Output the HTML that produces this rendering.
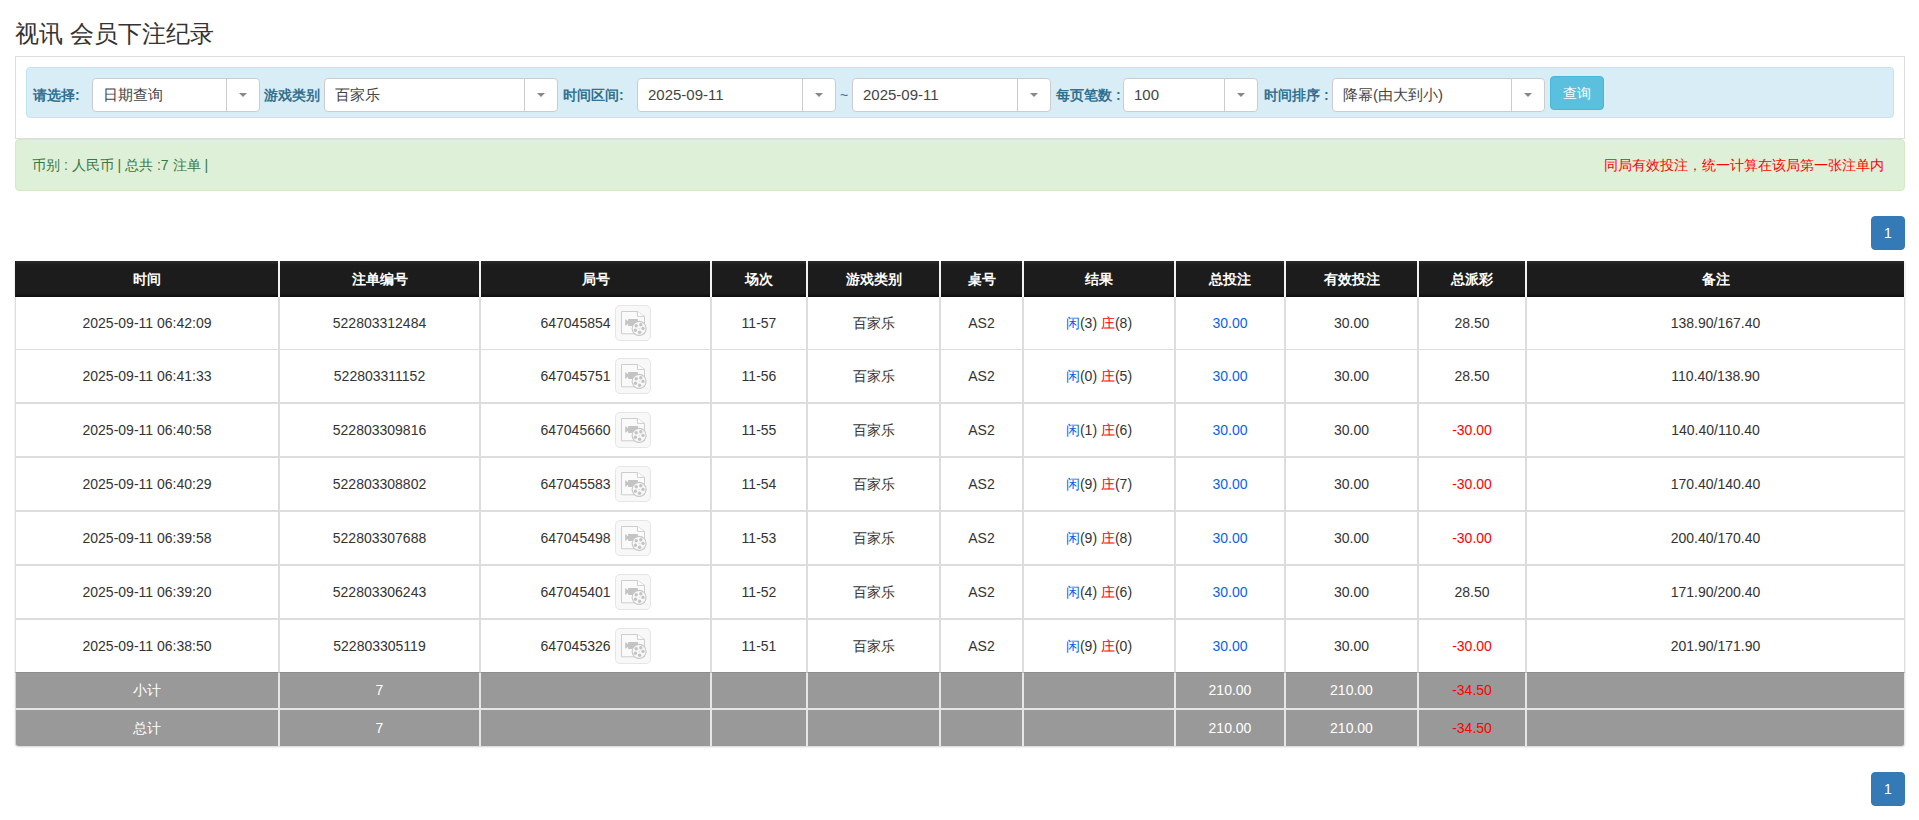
<!DOCTYPE html>
<html>
<head>
<meta charset="utf-8">
<style>
*{box-sizing:border-box;margin:0;padding:0}
html,body{width:1919px;height:820px;overflow:hidden;background:#fff}
body{font-family:"Liberation Sans",sans-serif;font-size:14px;color:#333;position:relative}
.abs{position:absolute}
h1{position:absolute;left:15px;top:18px;font-size:24px;font-weight:normal;line-height:32px;color:#333;white-space:nowrap}
.panel{position:absolute;left:15px;top:56px;width:1890px;height:83px;border:1px solid #ddd;border-bottom:1px solid #ddd;background:#fff}
.well{position:absolute;left:26px;top:67px;width:1868px;height:51px;background:#d9edf7;border:1px solid #bce8f1;border-radius:4px}
.lbl{position:absolute;top:85px;font-size:14px;font-weight:bold;color:#31708f;line-height:20px;white-space:nowrap}
.sel{position:absolute;top:78px;height:34px;background:#fff;border:1px solid #ccc;border-radius:4px;font-size:15px;color:#444;line-height:32px;white-space:nowrap}
.sel .t{position:absolute;left:10px;top:0}
.sel .d{position:absolute;top:0;right:0;height:32px;width:33px;border-left:1px solid #ccc}
.sel .d:after{content:"";position:absolute;left:12px;top:14px;border-left:4px solid transparent;border-right:4px solid transparent;border-top:4px solid #888}
.btn{position:absolute;left:1550px;top:76px;width:54px;height:34px;background:#5bc0de;border:1px solid #46b8da;border-radius:4px;color:#fff;font-size:14px;line-height:32px;text-align:center}
.alert{position:absolute;left:15px;top:139px;width:1890px;height:52px;background:#dff0d8;border:1px solid #d6e9c6;border-radius:4px;color:#3c763d;font-size:14px;line-height:20px}
.pg{position:absolute;left:1871px;width:34px;height:34px;background:#337ab7;border:1px solid #337ab7;border-radius:4px;color:#fff;text-align:center;line-height:32px;font-size:14px}

.tb{position:absolute;left:15px;top:261px;width:1890px;border-collapse:separate;border-spacing:0;table-layout:fixed;font-size:14px;color:#333;border-radius:0 0 4px 4px;box-shadow:0 1px 2px rgba(0,0,0,.18)}
.tb th,.tb td{text-align:center;vertical-align:middle;padding:0;white-space:nowrap;line-height:20px}
.tb th{height:36px;background:#1c1c1c;background-image:linear-gradient(#2b2b2b,#1c1c1c 4px,#1c1c1c 32px,#0c0c0c);color:#fff;font-weight:bold;border-left:1px solid #f2f2f2;border-right:1px solid #f2f2f2}
.tb th:first-child{border-left-color:#1c1c1c}
.tb td{border-left:1px solid #ddd;border-right:1px solid #ddd;background:#fff}
.tb tr.r1 td{height:53px;border-bottom:1px solid #ddd}
.tb tr.rn td{height:54px;border-top:1px solid #ddd;border-bottom:1px solid #ddd}
.tb tbody tr:last-child td{height:53px;border-bottom:0}
.tb tfoot td{background:#999;color:#fff;border-left:1px solid #e6e6e6;border-right:1px solid #e6e6e6}
.tb tr.f1 td{height:37px;padding-bottom:2px;border-top:1px solid #8c8c8c;border-bottom:1px solid #e6e6e6}
.tb tr.f2 td{height:37px;border-top:1px solid #e6e6e6}
.tb tfoot td:first-child{border-left-color:#d4d4d4}
.tb tr.f2 td:first-child{border-bottom-left-radius:3px}
.tb tr.f2 td:last-child{border-bottom-right-radius:3px}
.blue{color:#0a5fef}
.red{color:#f00}
.jn{display:inline-block;vertical-align:middle}
.ic{display:inline-block;vertical-align:middle;width:36px;height:36px;margin-left:4px;border:1px solid #e6e6e6;border-radius:5px;background:#f8f8f8;position:relative}
.ic svg{position:absolute;left:-1px;top:-1px}
</style>
</head>
<body>
<h1>视讯 会员下注纪录</h1>
<div class="panel"></div>
<div class="well"></div>
<div class="lbl" style="left:33px">请选择:</div>
<div class="sel" style="left:92px;width:168px"><span class="t">日期查询</span><span class="d"></span></div>
<div class="lbl" style="left:264px">游戏类别</div>
<div class="sel" style="left:324px;width:234px"><span class="t">百家乐</span><span class="d"></span></div>
<div class="lbl" style="left:563px">时间区间:</div>
<div class="sel" style="left:637px;width:199px"><span class="t">2025-09-11</span><span class="d"></span></div>
<div class="lbl" style="left:840px;font-weight:normal">~</div>
<div class="sel" style="left:852px;width:199px"><span class="t">2025-09-11</span><span class="d"></span></div>
<div class="lbl" style="left:1056px">每页笔数 :</div>
<div class="sel" style="left:1123px;width:135px"><span class="t">100</span><span class="d"></span></div>
<div class="lbl" style="left:1264px">时间排序 :</div>
<div class="sel" style="left:1332px;width:213px"><span class="t">降幂(由大到小)</span><span class="d"></span></div>
<div class="btn">查询</div>
<div class="alert"><span class="abs" style="left:16px;top:15px">币别 : 人民币 | 总共 :7 注单 |</span><span class="abs" style="right:20px;top:15px;color:#f00">同局有效投注，统一计算在该局第一张注单内</span></div>
<div class="pg" style="top:216px">1</div>
<svg width="0" height="0" style="position:absolute"><defs><g id="vid">
<path d="M6.5 6.5H22.4L29.5 11.4V28.8H6.5Z" fill="#fafafa" stroke="#cdcdcd" stroke-width="1"/>
<path d="M22.4 6.5V11.4H29.5" fill="#fff" stroke="#cdcdcd" stroke-width="1"/>
<path d="M10.2 14.1L13.1 16.2V14.1H22.9V20.9H13.1V18.8L10.2 20.9Z" fill="#c4c4c4"/>
<circle cx="24.1" cy="23.4" r="7" fill="#f8f8f8" stroke="#c6c6c6" stroke-width="1.1"/>
<circle cx="21.2" cy="20.8" r="1.7" fill="#c4c4c4"/><circle cx="25.8" cy="19.7" r="1.7" fill="#c4c4c4"/><circle cx="28" cy="23.4" r="1.7" fill="#c4c4c4"/><circle cx="24.6" cy="27.3" r="1.7" fill="#c4c4c4"/><circle cx="20.4" cy="25.3" r="1.7" fill="#c4c4c4"/><circle cx="24.1" cy="23.4" r="0.5" fill="#c6c6c6"/>
</g></defs></svg>
<table class="tb"><colgroup><col style="width:264px"><col style="width:201px"><col style="width:231px"><col style="width:96px"><col style="width:133px"><col style="width:83px"><col style="width:152px"><col style="width:110px"><col style="width:133px"><col style="width:108px"><col style="width:379px"></colgroup>
<thead><tr><th>时间</th><th>注单编号</th><th>局号</th><th>场次</th><th>游戏类别</th><th>桌号</th><th>结果</th><th>总投注</th><th>有效投注</th><th>总派彩</th><th>备注</th></tr></thead><tbody>
<tr class="r1"><td>2025-09-11 06:42:09</td><td>522803312484</td><td><span class="jn">647045854</span><i class="ic"><svg width="36" height="36" viewBox="0 0 36 36"><use href="#vid"/></svg></i></td><td>11-57</td><td>百家乐</td><td>AS2</td><td><span class="blue">闲</span>(3) <span class="red">庄</span>(8)</td><td class="blue">30.00</td><td>30.00</td><td>28.50</td><td>138.90/167.40</td></tr>
<tr class="r1"><td>2025-09-11 06:41:33</td><td>522803311152</td><td><span class="jn">647045751</span><i class="ic"><svg width="36" height="36" viewBox="0 0 36 36"><use href="#vid"/></svg></i></td><td>11-56</td><td>百家乐</td><td>AS2</td><td><span class="blue">闲</span>(0) <span class="red">庄</span>(5)</td><td class="blue">30.00</td><td>30.00</td><td>28.50</td><td>110.40/138.90</td></tr>
<tr class="rn"><td>2025-09-11 06:40:58</td><td>522803309816</td><td><span class="jn">647045660</span><i class="ic"><svg width="36" height="36" viewBox="0 0 36 36"><use href="#vid"/></svg></i></td><td>11-55</td><td>百家乐</td><td>AS2</td><td><span class="blue">闲</span>(1) <span class="red">庄</span>(6)</td><td class="blue">30.00</td><td>30.00</td><td><span class="red">-30.00</span></td><td>140.40/110.40</td></tr>
<tr class="rn"><td>2025-09-11 06:40:29</td><td>522803308802</td><td><span class="jn">647045583</span><i class="ic"><svg width="36" height="36" viewBox="0 0 36 36"><use href="#vid"/></svg></i></td><td>11-54</td><td>百家乐</td><td>AS2</td><td><span class="blue">闲</span>(9) <span class="red">庄</span>(7)</td><td class="blue">30.00</td><td>30.00</td><td><span class="red">-30.00</span></td><td>170.40/140.40</td></tr>
<tr class="rn"><td>2025-09-11 06:39:58</td><td>522803307688</td><td><span class="jn">647045498</span><i class="ic"><svg width="36" height="36" viewBox="0 0 36 36"><use href="#vid"/></svg></i></td><td>11-53</td><td>百家乐</td><td>AS2</td><td><span class="blue">闲</span>(9) <span class="red">庄</span>(8)</td><td class="blue">30.00</td><td>30.00</td><td><span class="red">-30.00</span></td><td>200.40/170.40</td></tr>
<tr class="rn"><td>2025-09-11 06:39:20</td><td>522803306243</td><td><span class="jn">647045401</span><i class="ic"><svg width="36" height="36" viewBox="0 0 36 36"><use href="#vid"/></svg></i></td><td>11-52</td><td>百家乐</td><td>AS2</td><td><span class="blue">闲</span>(4) <span class="red">庄</span>(6)</td><td class="blue">30.00</td><td>30.00</td><td>28.50</td><td>171.90/200.40</td></tr>
<tr class="rn"><td>2025-09-11 06:38:50</td><td>522803305119</td><td><span class="jn">647045326</span><i class="ic"><svg width="36" height="36" viewBox="0 0 36 36"><use href="#vid"/></svg></i></td><td>11-51</td><td>百家乐</td><td>AS2</td><td><span class="blue">闲</span>(9) <span class="red">庄</span>(0)</td><td class="blue">30.00</td><td>30.00</td><td><span class="red">-30.00</span></td><td>201.90/171.90</td></tr>
</tbody><tfoot>
<tr class="f1"><td>小计</td><td>7</td><td></td><td></td><td></td><td></td><td></td><td>210.00</td><td>210.00</td><td><span class="red">-34.50</span></td><td></td></tr>
<tr class="f2"><td>总计</td><td>7</td><td></td><td></td><td></td><td></td><td></td><td>210.00</td><td>210.00</td><td><span class="red">-34.50</span></td><td></td></tr>
</tfoot></table>
<div class="pg" style="top:772px">1</div>
</body>
</html>
